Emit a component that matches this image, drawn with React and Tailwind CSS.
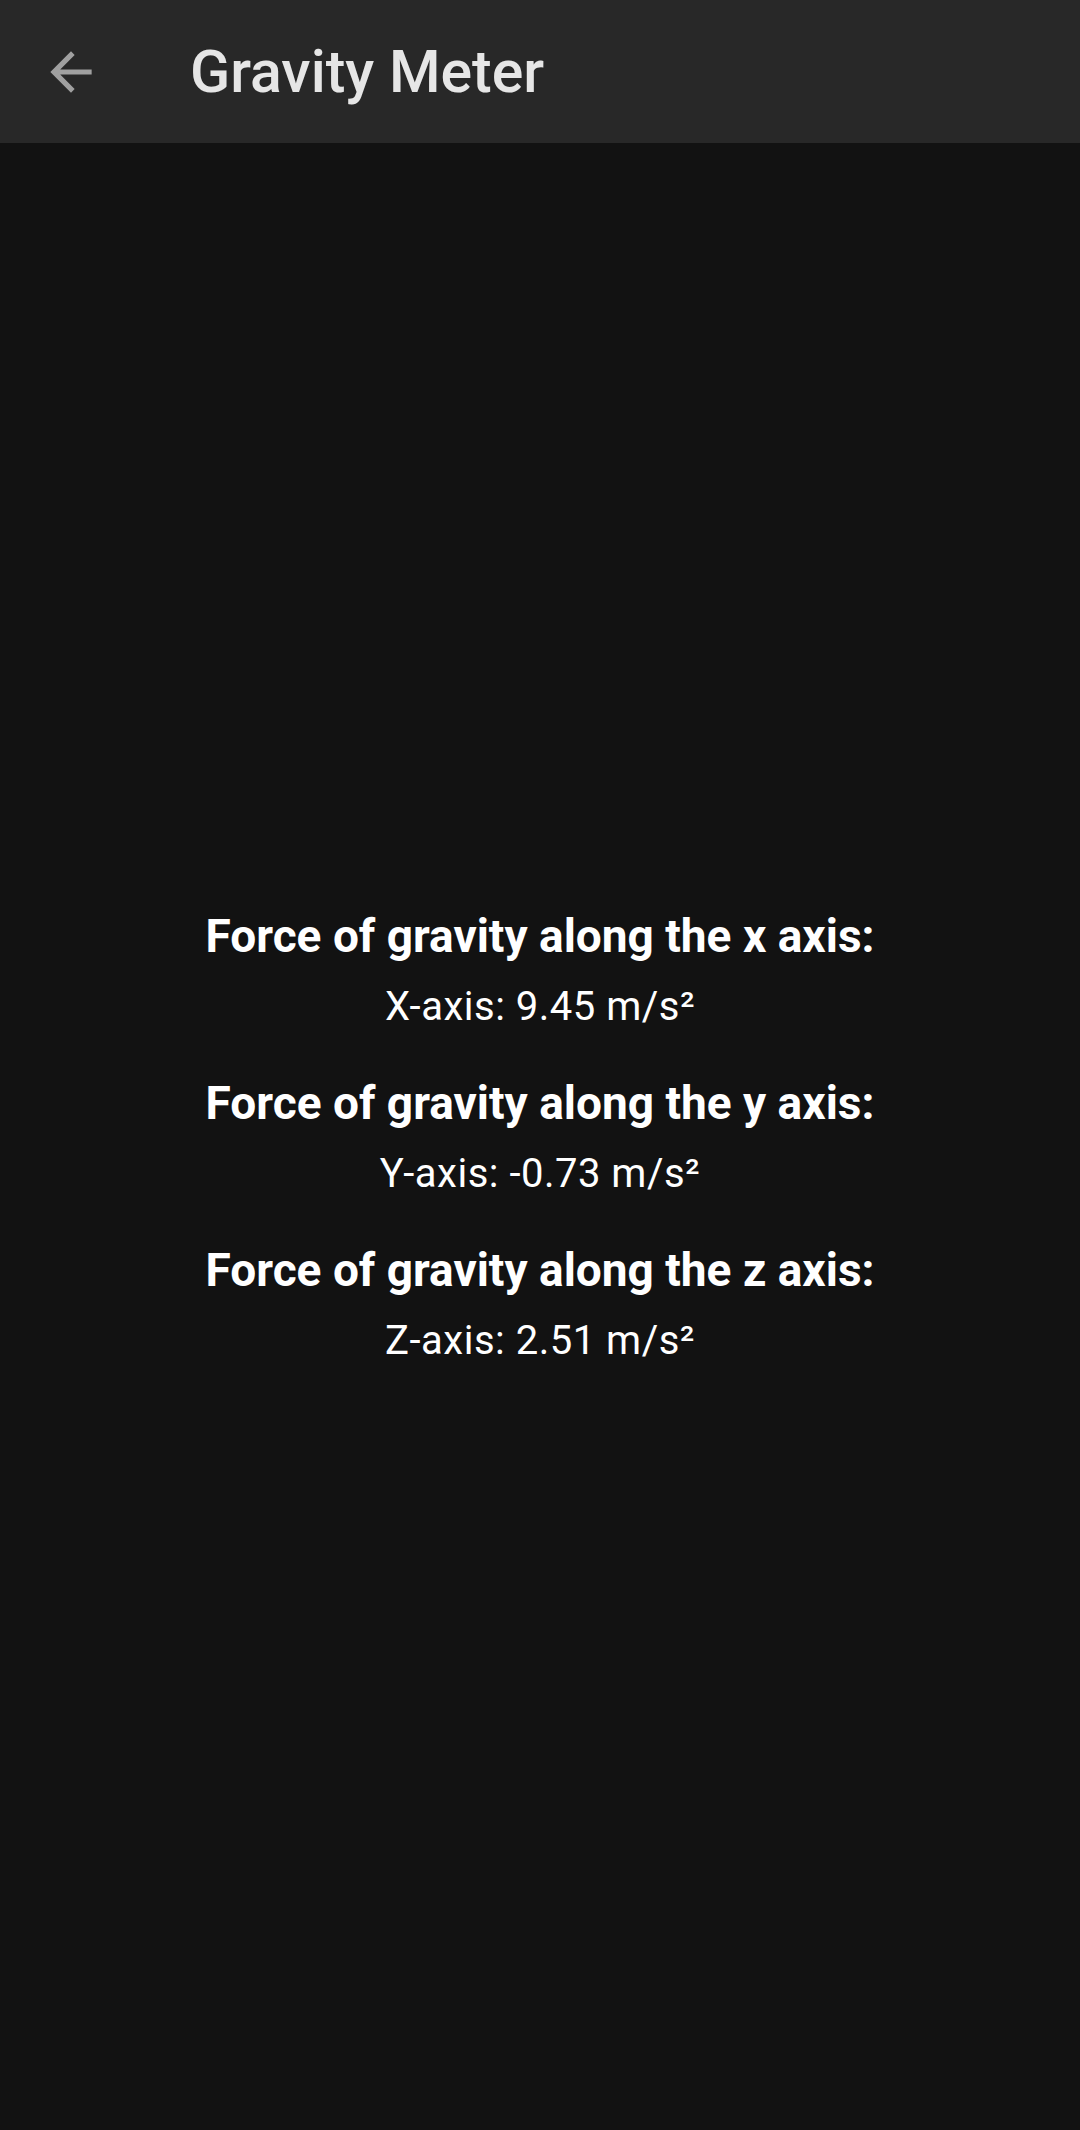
const axes = [
  { label: "x", text: "X-axis: 9.45 m/s²" },
  { label: "y", text: "Y-axis: -0.73 m/s²" },
  { label: "z", text: "Z-axis: 2.51 m/s²" },
];

const BackArrow = () => (
  <svg width="62" height="62" viewBox="0 0 24 24" fill="#a0a0a0">
    <path d="M20 11H7.83l5.59-5.59L12 4l-8 8 8 8 1.41-1.41L7.83 13H20v-2z" />
  </svg>
);

export default function App() {
  return (
    <div className="w-full h-[2130px] flex flex-col bg-[#121212] font-['Roboto',sans-serif]">
      <div className="h-[143px] shrink-0 bg-[#282828] flex items-center">
        <div className="w-[142px] flex justify-center">
          <BackArrow />
        </div>
        <span className="ml-[48px] text-[59px] font-medium text-[#e6e6e6] leading-none">Gravity Meter</span>
      </div>

      <div className="flex-1 flex flex-col items-center justify-center pt-[4px] text-white">
        {axes.map((a, i) => (
          <div key={a.label} className={`flex flex-col items-center ${i > 0 ? "mt-[40px]" : ""}`}>
            <div className="text-[46px] font-bold leading-[56px]">Force of gravity along the {a.label} axis:</div>
            <div className="mt-[15px] text-[40px] tracking-[0.5px] leading-[56px]">{a.text}</div>
          </div>
        ))}
      </div>
    </div>
  );
}
